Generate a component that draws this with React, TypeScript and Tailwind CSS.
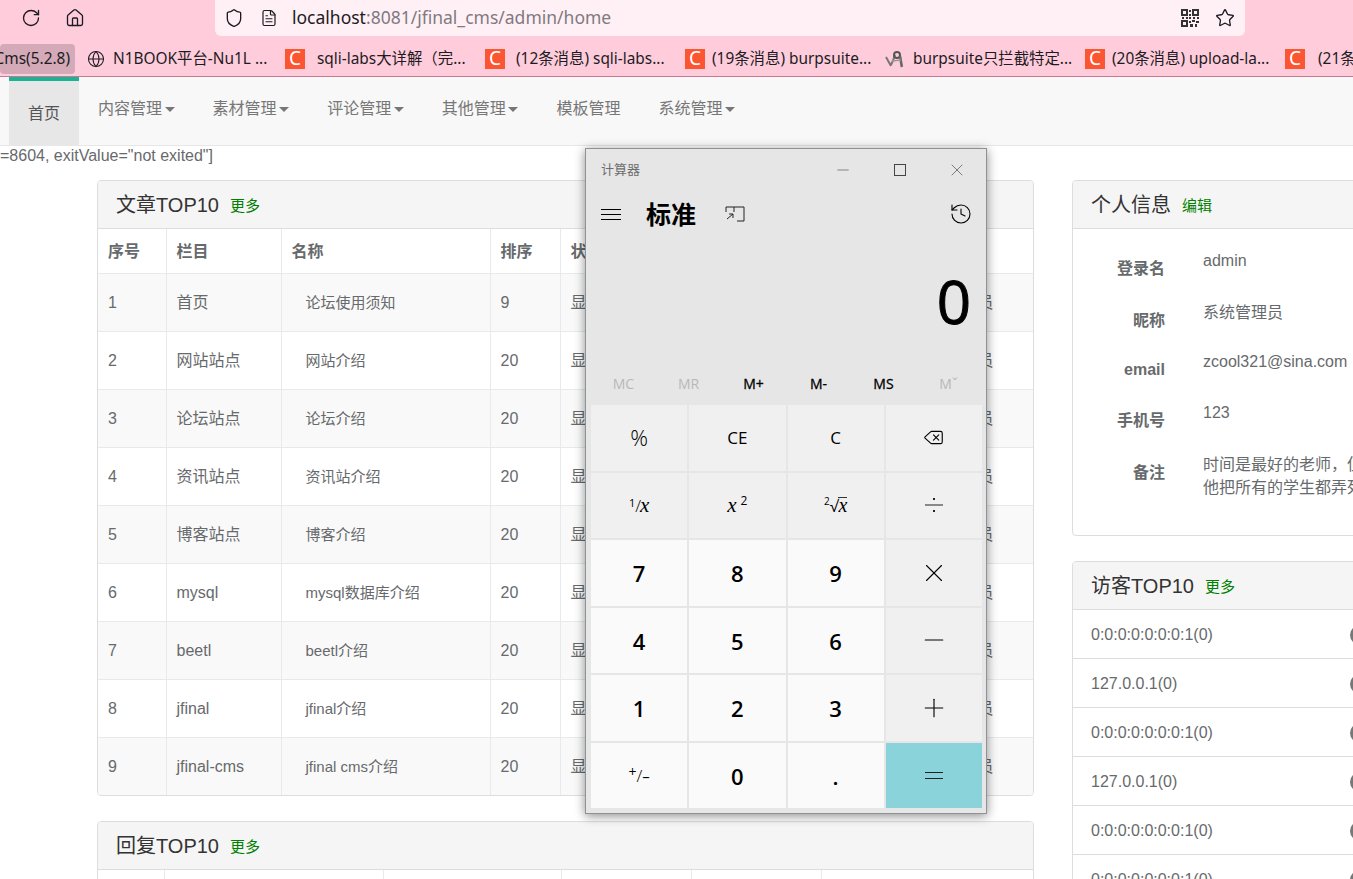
import { Delete, FileText, Globe, History, Home, Minus, Plus, RotateCw, Shield, Star, X } from "lucide-react";

const bookmarks = [
  { text: "N1BOOK平台-Nu1L ...", offset: "ml-[8px]", icon: "globe" },
  { text: "sqli-labs大详解（完...", offset: "ml-[12px]", icon: "c" },
  { text: "(12条消息) sqli-labs...", offset: "ml-[11px]", icon: "c" },
  { text: "(19条消息) burpsuite...", offset: "ml-[7px]", icon: "c" },
  { text: "burpsuite只拦截特定...", offset: "ml-[8px]", icon: "burp" },
  { text: "(20条消息) upload-la...", offset: "ml-[7px]", icon: "c" },
  { text: "(21条消息) upload-la...", offset: "ml-[13px]", icon: "c" },
];

const navItems = [
  { label: "内容管理", caret: true },
  { label: "素材管理", caret: true },
  { label: "评论管理", caret: true },
  { label: "其他管理", caret: true },
  { label: "模板管理", caret: false },
  { label: "系统管理", caret: true },
];

const articles = [
  ["1", "首页", "论坛使用须知", "9"],
  ["2", "网站站点", "网站介绍", "20"],
  ["3", "论坛站点", "论坛介绍", "20"],
  ["4", "资讯站点", "资讯站介绍", "20"],
  ["5", "博客站点", "博客介绍", "20"],
  ["6", "mysql", "mysql数据库介绍", "20"],
  ["7", "beetl", "beetl介绍", "20"],
  ["8", "jfinal", "jfinal介绍", "20"],
  ["9", "jfinal-cms", "jfinal cms介绍", "20"],
];

const profile = [
  { label: "登录名", value: ["admin"], row: "h-[52px]" },
  { label: "昵称", value: ["系统管理员"], row: "h-[49px]" },
  { label: "email", value: ["zcool321@sina.com"], row: "h-[51px]" },
  { label: "手机号", value: ["123"], row: "h-[52px]" },
  { label: "备注", value: ["时间是最好的老师，但遗憾的是，", "他把所有的学生都弄死了。"], row: "h-[51px]" },
];

const visitors = ["0:0:0:0:0:0:0:1(0)", "127.0.0.1(0)", "0:0:0:0:0:0:0:1(0)", "127.0.0.1(0)", "0:0:0:0:0:0:0:1(0)", "0:0:0:0:0:0:0:1(0)"];

function CIcon() {
  return (
    <span className="flex h-[20px] w-[20px] shrink-0 items-center justify-center bg-[#fc5531] font-['Noto_Sans',sans-serif] text-[19px] leading-none text-white">
      C
    </span>
  );
}

function BurpIcon() {
  return (
    <svg width="20" height="20" viewBox="0 0 20 20" fill="none" className="shrink-0">
      <path d="M1 8l5 9M6 16c2-4 3-7 4-10" stroke="#777" strokeWidth="2" />
      <circle cx="12" cy="6" r="3" stroke="#555" strokeWidth="2" />
      <path d="M15 7c1 4 1 8 2 11" stroke="#666" strokeWidth="2.5" />
      <path d="M7 12l9-1" stroke="#999" strokeWidth="1.5" />
    </svg>
  );
}

function QrIcon() {
  return (
    <svg width="18" height="18" viewBox="0 0 18 18" fill="#333">
      <path d="M0 0h7v7H0zM2 2v3h3V2zM11 0h7v7h-7zM13 2v3h3V2zM0 11h7v7H0zM2 13v3h3v-3z" fillRule="evenodd" />
      <path d="M8 1h2v2H8zM8 5h2v2H8zM1 8h2v2H1zM5 8h2v2H5zM8 8h2v2H8zM12 8h2v2h-2zM16 8h2v2h-2zM8 12h2v2H8zM11 11h3v2h-3zM15 12h3v2h-3zM9 15h3v3H9zM14 15h2v3h-2z" />
    </svg>
  );
}

function DivideIcon() {
  return (
    <svg width="18" height="16" viewBox="0 0 18 16" fill="#222">
      <rect x="0" y="7.5" width="18" height="1" />
      <rect x="8" y="1" width="2" height="2" />
      <rect x="8" y="13" width="2" height="2" />
    </svg>
  );
}

function PanelHeading({ title, link }: { title: string; link: string }) {
  return (
    <div className="flex h-[48px] items-center gap-[11px] border-b border-[#dddddd] bg-[#f5f5f5] pl-[18px] pr-3">
      <span className="text-[20px] leading-none text-[#333333]">{title}</span>
      <span className="mt-[2px] text-[15px] leading-none text-[#008000]">{link}</span>
    </div>
  );
}

function ArticleTable() {
  return (
    <table className="w-full table-fixed border-collapse text-[16px] text-[#676a6c]">
      <colgroup>
        <col className="w-[68px]" />
        <col className="w-[115px]" />
        <col className="w-[209px]" />
        <col className="w-[70px]" />
        <col className="w-[343px]" />
        <col />
      </colgroup>
      <thead>
        <tr className="h-[44px] border-b border-[#e7eaec] font-bold">
          {["序号", "栏目", "名称", "排序", "状态", ""].map((h, i) => (
            <th key={i} className={`px-[10px] pt-[2px] text-left ${i < 5 ? "border-r border-[#e7eaec]" : ""}`}>
              {h}
            </th>
          ))}
        </tr>
      </thead>
      <tbody>
        {articles.map((a, i) => (
          <tr key={a[0]} className={`h-[58px] border-b border-[#e7eaec] last:border-b-0 ${i % 2 === 0 ? "bg-[#f9f9f9]" : "bg-white"}`}>
            <td className="border-r border-[#e7eaec] px-[10px] pt-[2px]">{a[0]}</td>
            <td className="border-r border-[#e7eaec] px-[10px] pt-[2px]">{a[1]}</td>
            <td className="border-r border-[#e7eaec] pl-[24px] pr-[10px] pt-[2px] text-[15px]">{a[2]}</td>
            <td className="border-r border-[#e7eaec] px-[10px] pt-[2px]">{a[3]}</td>
            <td className="border-r border-[#e7eaec] px-[10px] pt-[2px]">显示</td>
            <td className="whitespace-nowrap px-[10px] pt-[2px]">系统管理员</td>
          </tr>
        ))}
      </tbody>
    </table>
  );
}

function Calculator() {
  const memory = [
    { t: "MC", on: false },
    { t: "MR", on: false },
    { t: "M+", on: true },
    { t: "M-", on: true },
    { t: "MS", on: true },
    { t: "Mˇ", on: false },
  ];
  const serif = "font-['Liberation_Serif',serif] italic";
  const op = "bg-[#f0f0f0]";
  const num = "bg-[#fafafa] pt-[2px] text-[22px] font-semibold";
  const keys = [
    { k: "%", c: `${op} text-[22px] font-light` },
    { k: "CE", c: `${op} text-[17px]` },
    { k: "C", c: `${op} text-[17px]` },
    { k: <Delete size={21} strokeWidth={1.3} />, c: op },
    {
      k: (
        <span className="flex items-baseline">
          <span className="relative top-[-5px] text-[11px] leading-none">1</span>
          <span className="text-[17px] font-light leading-none">/</span>
          <span className={`${serif} ml-[-1px] text-[21px] leading-none`}>x</span>
        </span>
      ),
      c: op,
    },
    {
      k: (
        <span className="flex items-baseline">
          <span className={`${serif} text-[21px] leading-none`}>x</span>
          <span className="relative top-[-7px] ml-[4px] text-[12px] leading-none">2</span>
        </span>
      ),
      c: op,
    },
    {
      k: (
        <span className="flex items-baseline">
          <span className="relative top-[-7px] text-[10px] leading-none">2</span>
          <span className="text-[16px] leading-none">√</span>
          <span className={`${serif} border-t border-[#333] text-[20px] leading-[15px]`}>x</span>
        </span>
      ),
      c: op,
    },
    { k: <DivideIcon />, c: op },
    { k: "7", c: num },
    { k: "8", c: num },
    { k: "9", c: num },
    { k: <X size={30} strokeWidth={0.9} />, c: op },
    { k: "4", c: num },
    { k: "5", c: num },
    { k: "6", c: num },
    { k: <Minus size={30} strokeWidth={0.9} />, c: op },
    { k: "1", c: num },
    { k: "2", c: num },
    { k: "3", c: num },
    { k: <Plus size={30} strokeWidth={0.9} />, c: op },
    {
      k: (
        <span className="flex items-baseline">
          <span className="relative top-[-5px] text-[14px] leading-none">+</span>
          <span className="text-[17px] font-light leading-none">/</span>
          <span className="text-[15px] leading-none">–</span>
        </span>
      ),
      c: "bg-[#fafafa]",
    },
    { k: "0", c: num },
    { k: ".", c: num },
    {
      k: (
        <span className="flex w-[18px] flex-col gap-[5px]">
          <span className="h-px bg-[#222]" />
          <span className="h-px bg-[#222]" />
        </span>
      ),
      c: "bg-[#8ad3da]",
    },
  ];

  return (
    <div className="absolute left-[585px] top-[148px] flex h-[666px] w-[402px] flex-col border border-[#8d9296] bg-[#e6e6e6] font-['Open_Sans','Noto_Sans_CJK_SC',sans-serif] text-black shadow-[0_2px_10px_rgba(0,0,0,0.45)]">
      <div className="flex h-[41px] shrink-0 items-center pl-[15px] pr-[19px] text-[13px] text-[#6e6e6e]">
        <span>计算器</span>
        <div className="ml-auto flex items-center gap-[37px] text-[#444]">
          <span className="flex w-[20px] justify-center"><Minus size={18} strokeWidth={0.8} /></span>
          <span className="flex w-[20px] justify-center"><span className="h-[12px] w-[12px] border border-[#444]" /></span>
          <span className="flex w-[20px] justify-center"><X size={20} strokeWidth={0.8} /></span>
        </div>
      </div>
      <div className="flex h-[48px] shrink-0 items-center pl-[15px] pr-[13px]">
        <span className="flex w-[20px] flex-col gap-[4px]">
          <span className="h-px bg-black" />
          <span className="h-px bg-black" />
          <span className="h-px bg-black" />
        </span>
        <span className="ml-[25px] text-[25px] font-bold leading-none">标准</span>
        <svg className="ml-[29px]" width="20" height="18" viewBox="0 0 20 18" fill="none" stroke="#222" strokeWidth="1">
          <path d="M9 7V2H1v5M9 2h10v14h-7" />
          <path d="M2 14l6-5M4 9h4v4" />
        </svg>
        <History className="ml-auto" size={24} strokeWidth={1.1} />
      </div>
      <div className="flex h-[122px] shrink-0 items-start justify-end pr-[15px] text-[60px] leading-none [-webkit-text-stroke:1px_black]">
        <span className="mt-[33px]">0</span>
      </div>
      <div className="grid h-[45px] shrink-0 grid-cols-6 items-center px-[5px] pt-[1px] text-[14px]">
        {memory.map((m) => (
          <span key={m.t} className={`text-center ${m.on ? "text-black [-webkit-text-stroke:0.3px_black]" : "text-[#b8b8b8]"}`}>
            {m.t}
          </span>
        ))}
      </div>
      <div className="grid h-[403px] shrink-0 grid-cols-4 grid-rows-6 gap-[2px] pl-[5px] pr-[4px]">
        {keys.map((key, i) => (
          <div key={i} className={`flex items-center justify-center ${key.c}`}>
            {key.k}
          </div>
        ))}
      </div>
    </div>
  );
}

export default function App() {
  return (
    <div className="relative h-[879px] w-[1353px] overflow-hidden bg-white font-['Liberation_Sans','Noto_Sans_CJK_SC',sans-serif] text-[16px] text-[#676a6c]">
      {/* browser toolbar */}
      <div className="flex h-[77px] flex-col border-b border-[#c27b92] bg-[#ffccdc] font-['Noto_Sans','Noto_Sans_CJK_SC',sans-serif] text-[#1c1b22]">
        <div className="flex h-[43px] items-start">
          <div className="flex h-[36px] w-[215px] items-center gap-[24px] pl-[21px]">
            <RotateCw size={20} strokeWidth={1.6} />
            <Home size={20} strokeWidth={1.6} />
          </div>
          <div className="flex h-[36px] w-[1030px] items-center rounded-b-[6px] bg-[#fff0f5] pl-[9px] pr-[10px]">
            <Shield size={20} strokeWidth={1.6} />
            <FileText className="ml-[16px]" size={18} strokeWidth={1.6} />
            <span className="ml-[14px] mt-[-2px] text-[17.5px]">
              localhost<span className="text-[#7f7a80]">:8081/jfinal_cms/admin/home</span>
            </span>
            <div className="ml-auto flex items-center gap-[16px]">
              <QrIcon />
              <Star size={20} strokeWidth={1.6} />
            </div>
          </div>
        </div>
        <div className="flex h-[32px] items-center whitespace-nowrap text-[15.4px]">
          <div className="mr-[10px] flex h-[30px] w-[75px] shrink-0 items-center justify-end overflow-hidden rounded-[4px] bg-[#d4a9b8] pr-[5px]">Cms(5.2.8)</div>
          {bookmarks.map((b) => (
            <div key={b.text} className="flex w-[200px] shrink-0 items-center">
              {b.icon === "globe" && <Globe className="ml-[2px]" size={18} strokeWidth={1.4} />}
              {b.icon === "c" && <CIcon />}
              {b.icon === "burp" && <BurpIcon />}
              <span className={b.offset}>{b.text}</span>
            </div>
          ))}
        </div>
      </div>

      {/* navbar */}
      <nav className="flex h-[69px] items-start border-b border-[#e7e7e7] bg-[#f8f8f8] pl-[9px] text-[16px] text-[#777777]">
        <div className="flex h-[68px] w-[70px] items-center justify-center border-t-4 border-[#1ab394] bg-[#e7e7e7] pt-[2px] text-[#555555]">首页</div>
        {navItems.map((n) => (
          <div key={n.label} className="flex h-[63px] items-center px-[19px]">
            {n.label}
            {n.caret && <span className="ml-[2.6px] mt-[2px] border-x-[5px] border-t-[5px] border-x-transparent border-t-[#777777]" />}
          </div>
        ))}
      </nav>

      <div className="h-[21px] whitespace-nowrap leading-[20px]">=8604, exitValue="not exited"]</div>

      <div className="mt-[13px] flex items-start gap-[38px] pl-[97px]">
        <div className="flex w-[937px] shrink-0 flex-col gap-[25px]">
          <section className="overflow-hidden rounded-[4px] border border-[#dddddd] bg-white">
            <PanelHeading title="文章TOP10" link="更多" />
            <ArticleTable />
          </section>
          <section className="overflow-hidden rounded-[4px] border border-[#dddddd] bg-white">
            <PanelHeading title="回复TOP10" link="更多" />
            <div className="grid h-[60px] grid-cols-[67px_219px_178px_130px_130px_1fr] divide-x divide-[#e7eaec]">
              <div />
              <div />
              <div />
              <div />
              <div />
              <div />
            </div>
          </section>
        </div>

        <div className="flex w-[420px] shrink-0 flex-col gap-[25px]">
          <section className="h-[356px] overflow-hidden rounded-[4px] border border-[#dddddd] bg-white">
            <PanelHeading title="个人信息" link="编辑" />
            <div className="pt-[20px]">
              {profile.map((p) => (
                <div key={p.label} className={`flex ${p.row}`}>
                  <div className="w-[92px] shrink-0 pt-[10px] text-right font-bold leading-[20px] text-[#676a6c]">{p.label}</div>
                  <div className="ml-[38px] whitespace-nowrap">
                    {p.value.map((v) => (
                      <div key={v} className="leading-[23px]">{v}</div>
                    ))}
                  </div>
                </div>
              ))}
            </div>
          </section>
          <section className="overflow-hidden rounded-[4px] border border-[#dddddd] bg-white">
            <PanelHeading title="访客TOP10" link="更多" />
            {visitors.map((v, i) => (
              <div key={i} className="flex h-[49px] items-center border-b border-[#dddddd] pl-[18px] pt-[1px]">
                <span className="w-[259px]">{v}</span>
                <span className="h-[20px] w-[30px] rounded-full bg-[#777777]" />
              </div>
            ))}
          </section>
        </div>
      </div>

      <Calculator />
    </div>
  );
}
